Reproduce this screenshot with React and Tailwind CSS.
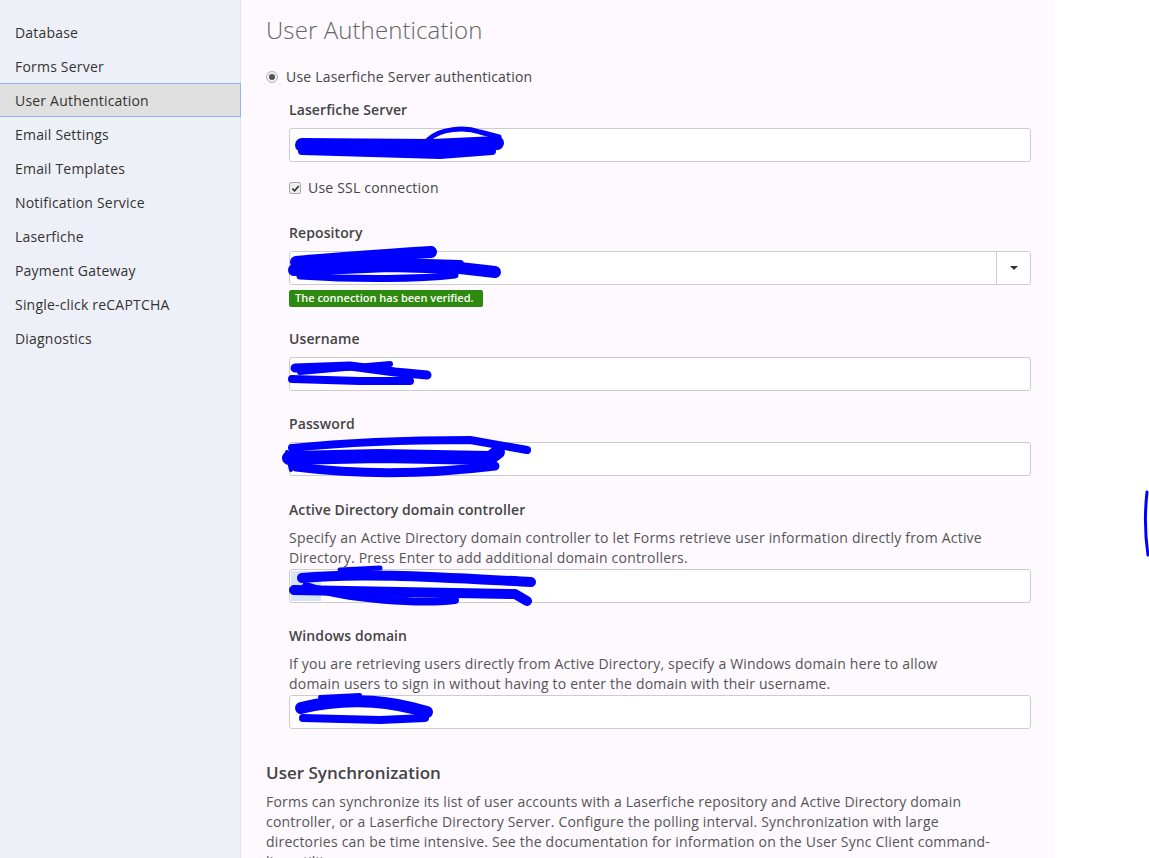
import React from 'react';

const navItems = [
  'Database',
  'Forms Server',
  'User Authentication',
  'Email Settings',
  'Email Templates',
  'Notification Service',
  'Laserfiche',
  'Payment Gateway',
  'Single-click reCAPTCHA',
  'Diagnostics',
];

// redaction marks drawn over the screenshot, page coordinates
const scribbles = [
  // laserfiche server
  { d: 'M302 145 L 432 146 L 497 143', w: 14 },
  { d: 'M302 151 L 440 155 L 492 151', w: 8 },
  { d: 'M428 140 C 440 128, 465 127, 480 132 L 499 137', w: 5 },
  // repository
  { d: 'M296 262 C 340 258, 400 254, 431 252', w: 12 },
  { d: 'M294 270 L 390 266 L 460 268 L 495 272', w: 12 },
  { d: 'M300 276 C 360 280, 420 279, 455 275', w: 7 },
  { d: 'M395 262 L 460 264', w: 8 },
  // username
  { d: 'M295 368 L 350 366 L 395 372 L 427 375', w: 9 },
  { d: 'M292 379 L 360 381 L 410 381', w: 8 },
  { d: 'M300 372 L 390 364', w: 6 },
  // password
  { d: 'M292 448 C 350 442, 420 440, 470 440 L 527 450', w: 8 },
  { d: 'M289 458 L 380 456 L 490 458 L 498 452', w: 14 },
  { d: 'M296 467 C 360 475, 430 474, 495 466', w: 9 },
  { d: 'M287 452 L 291 470', w: 4 },
  // ad domain controller
  { d: 'M302 578 C 360 572, 450 578, 531 582', w: 10 },
  { d: 'M294 590 L 400 592 L 515 594 L 527 601', w: 10 },
  { d: 'M306 586 C 350 600, 420 604, 455 600', w: 8 },
  { d: 'M340 570 L 380 568', w: 5 },
  // windows domain
  { d: 'M301 708 C 340 698, 380 700, 412 708 L 427 712', w: 12 },
  { d: 'M303 718 L 380 720 L 425 718', w: 8 },
  { d: 'M320 697 L 360 695', w: 4 },
  // stray mark
  { d: 'M1147 492 C 1145 510, 1145 535, 1148 555', w: 3 },
];

const Field = ({ label, desc, select, className = '' }) => (
  <div className={className}>
    <div className="text-[14px] leading-[20px] font-semibold text-[#444] tracking-[0.1px]">{label}</div>
    {desc && <div className="mt-[8px] text-[14px] leading-[20px] text-[#555] tracking-[0.2px]">{desc}</div>}
    <div
      className={`${desc ? 'mt-px' : 'mt-[8px]'} h-[34px] w-[742px] rounded-[3px] border border-[#ccc] bg-white flex justify-end`}
    >
      {select && (
        <div className="w-[34px] h-full border-l border-[#ccc] flex items-center justify-center">
          <div className="w-0 h-0 border-l-[4px] border-r-[4px] border-t-[4px] border-l-transparent border-r-transparent border-t-[#333]" />
        </div>
      )}
    </div>
  </div>
);

const App = () => {
  return (
    <div
      className="relative flex h-[858px] w-[1149px] overflow-hidden bg-white"
      style={{ fontFamily: '"Open Sans", "Noto Sans", sans-serif' }}
    >
      <aside className="w-[241px] shrink-0 bg-[#eef0f7] border-r border-[#e3e4ec] pt-[15px]">
        {navItems.map((item) => (
          <div
            key={item}
            className={
              item === 'User Authentication'
                ? 'h-[34px] pl-[15px] flex items-center text-[14px] tracking-[0.2px] text-[#333] bg-[#e0e0e0] border-y border-r border-[#8fb4f5] -mr-px'
                : 'h-[34px] pl-[15px] flex items-center text-[14px] tracking-[0.2px] text-[#333]'
            }
          >
            {item}
          </div>
        ))}
      </aside>

      <main className="w-[814px] shrink-0 bg-[#fdf9fe] pl-[25px] pt-[14px]">
        <h1 className="text-[24px] leading-[32px] font-light text-[#666] tracking-[0.1px]">User Authentication</h1>

        <div className="mt-[21px] flex items-center gap-[8px] text-[14px] leading-[20px] text-[#444] tracking-[0.2px]">
          <span className="w-[12px] h-[12px] rounded-full border border-[#b5b5b5] bg-[#eee] flex items-center justify-center">
            <span className="w-[6px] h-[6px] rounded-full bg-[#555]" />
          </span>
          Use Laserfiche Server authentication
        </div>

        <div className="ml-[23px]">
          <Field label="Laserfiche Server" className="mt-[13px]" />

          <div className="mt-[16px] flex items-center gap-[7px] text-[14px] leading-[20px] text-[#444] tracking-[0.2px]">
            <span className="w-[12px] h-[12px] rounded-[2px] border border-[#aaa] bg-[#eee] flex items-center justify-center">
              <svg viewBox="0 0 10 10" className="w-[9px] h-[9px]">
                <path d="M1.5 5.2 L4 7.6 L8.6 2.2" fill="none" stroke="#333" strokeWidth="1.8" />
              </svg>
            </span>
            Use SSL connection
          </div>

          <Field label="Repository" select className="mt-[25px]" />
          <div className="mt-[5px] w-[194px] h-[17px] rounded-[2px] bg-[#2d8a0e] text-white text-[11px] font-semibold flex items-center pl-[6px]">
            The connection has been verified.
          </div>

          <Field label="Username" className="mt-[22px]" />
          <Field label="Password" className="mt-[23px]" />
          <Field
            label="Active Directory domain controller"
            className="mt-[24px]"
            desc={
              <>
                Specify an Active Directory domain controller to let Forms retrieve user information directly from Active
                <br />
                Directory. Press Enter to add additional domain controllers.
              </>
            }
          />
          <Field
            label="Windows domain"
            className="mt-[23px]"
            desc={
              <>
                If you are retrieving users directly from Active Directory, specify a Windows domain here to allow
                <br />
                domain users to sign in without having to enter the domain with their username.
              </>
            }
          />
        </div>

        <h2 className="mt-[32px] text-[17px] leading-[24px] font-semibold text-[#444]">User Synchronization</h2>
        <p className="mt-[7px] text-[14px] leading-[20px] text-[#555] tracking-[0.2px] whitespace-nowrap">
          Forms can synchronize its list of user accounts with a Laserfiche repository and Active Directory domain
          <br />
          controller, or a Laserfiche Directory Server. Configure the polling interval. Synchronization with large
          <br />
          directories can be time intensive. See the documentation for information on the User Sync Client command-
          <br />
          line utility.
        </p>
      </main>

      <svg
        className="absolute inset-0 pointer-events-none"
        width="1149"
        height="858"
        viewBox="0 0 1149 858"
      >
        <rect x="291" y="571" width="30" height="30" fill="#d6e6f6" />
        {scribbles.map((s, i) => (
          <path
            key={i}
            d={s.d}
            fill="none"
            stroke="#0000ff"
            strokeWidth={s.w}
            strokeLinecap="round"
            strokeLinejoin="round"
          />
        ))}
      </svg>
    </div>
  );
};

export default App;
